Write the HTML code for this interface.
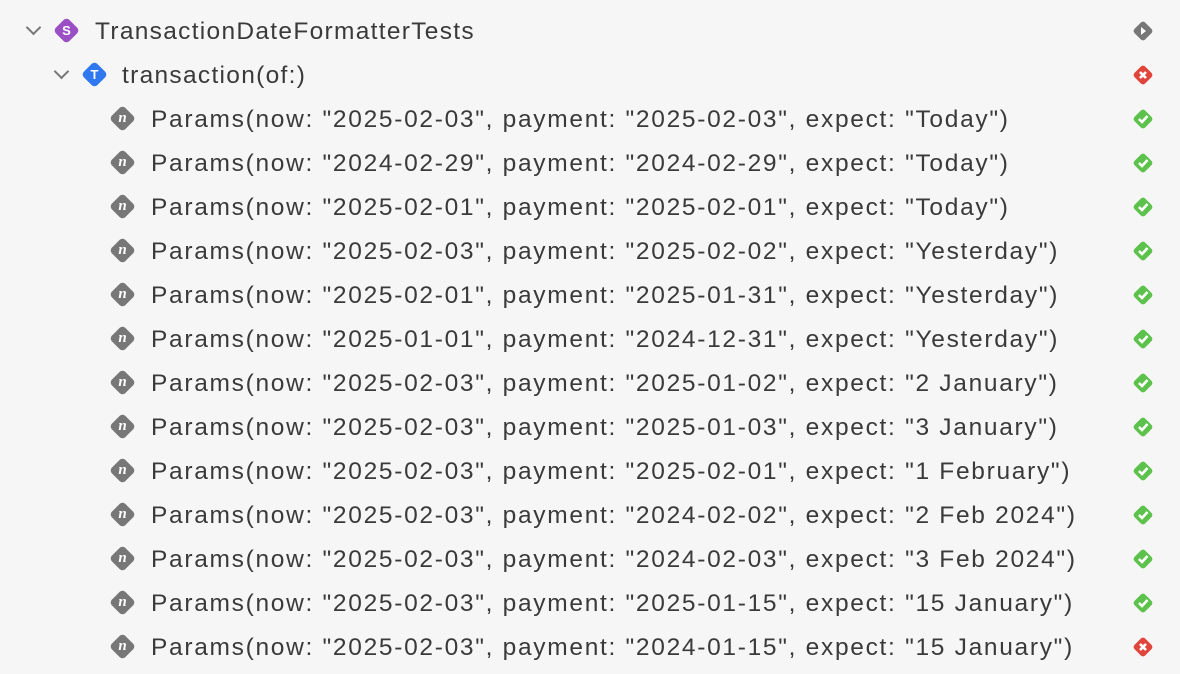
<!DOCTYPE html>
<html><head><meta charset="utf-8"><style>
body{margin:0;width:1180px;height:674px;background:#f6f6f6;font-family:"Liberation Sans",sans-serif;color:#3a3a3a;overflow:hidden;position:relative}
.r{position:absolute;height:44px;line-height:44px;font-size:24.5px;letter-spacing:1.7px;white-space:nowrap}
.d{position:absolute;width:19px;height:19px;border-radius:4px;transform:rotate(45deg)}
.dl{position:absolute;color:#fff;font-weight:bold;text-align:center;width:27px;line-height:27px}
.chev{position:absolute;width:9px;height:9px;border-right:2.5px solid #777;border-bottom:2.5px solid #777;transform:rotate(45deg)}
.st{position:absolute;left:1131px;width:24px;height:24px}
</style></head><body>
<div class="chev" style="left:28px;top:22px"></div>
<div class="d" style="left:57px;top:21px;background:#9b4fc4"></div><div class="dl" style="left:53px;top:17px;font-size:13px">S</div>
<div class="r" style="left:95px;top:10px;letter-spacing:1.3px">TransactionDateFormatterTests</div>
<div class="chev" style="left:56px;top:66px"></div>
<div class="d" style="left:85px;top:65px;background:#2f78f0"></div><div class="dl" style="left:81px;top:61px;font-size:13px">T</div>
<div class="r" style="left:122px;top:54px;letter-spacing:1.3px">transaction(of:)</div>
<svg class="st" style="top:19px" viewBox="0 0 24 24"><rect x="4.5" y="4.5" width="15" height="15" rx="3" transform="rotate(45 12 12)" fill="#777"/><path d="M10 8L15 12L10 16Z" fill="#fff"/></svg>
<svg class="st" style="top:63px" viewBox="0 0 24 24"><rect x="4.5" y="4.5" width="15" height="15" rx="3" transform="rotate(45 12 12)" fill="#e0443a"/><path d="M9 9L15 15M15 9L9 15" stroke="#fff" stroke-width="2.6"/></svg>
<div id="rows"></div>
<script>
var t=[
['2025-02-03','2025-02-03','Today',1],['2024-02-29','2024-02-29','Today',1],['2025-02-01','2025-02-01','Today',1],
['2025-02-03','2025-02-02','Yesterday',1],['2025-02-01','2025-01-31','Yesterday',1],['2025-01-01','2024-12-31','Yesterday',1],
['2025-02-03','2025-01-02','2 January',1],['2025-02-03','2025-01-03','3 January',1],['2025-02-03','2025-02-01','1 February',1],
['2025-02-03','2024-02-02','2 Feb 2024',1],['2025-02-03','2024-02-03','3 Feb 2024',1],['2025-02-03','2025-01-15','15 January',1],
['2025-02-03','2024-01-15','15 January',0]];
var h='';
t.forEach(function(a,i){var y=119+44*i;
h+='<div class="d" style="left:113px;top:'+(y-10)+'px;background:#777"></div><div class="dl" style="left:109px;top:'+(y-14)+'px;font-size:15px;font-family:\'Liberation Serif\',serif;font-style:italic">n</div>';
h+='<div class="r" style="left:151px;top:'+(y-21)+'px">Params(now: "'+a[0]+'", payment: "'+a[1]+'", expect: "'+a[2]+'")</div>';
if(a[3])h+='<svg class="st" style="top:'+(y-12)+'px" viewBox="0 0 24 24"><rect x="4.5" y="4.5" width="15" height="15" rx="3" transform="rotate(45 12 12)" fill="#5cc24c"/><path d="M8 12L11 15L16.5 9" stroke="#fff" stroke-width="2.6" fill="none"/></svg>';
else h+='<svg class="st" style="top:'+(y-12)+'px" viewBox="0 0 24 24"><rect x="4.5" y="4.5" width="15" height="15" rx="3" transform="rotate(45 12 12)" fill="#e0443a"/><path d="M9 9L15 15M15 9L9 15" stroke="#fff" stroke-width="2.6"/></svg>';
});
document.getElementById('rows').innerHTML=h;
</script>
</body></html>
